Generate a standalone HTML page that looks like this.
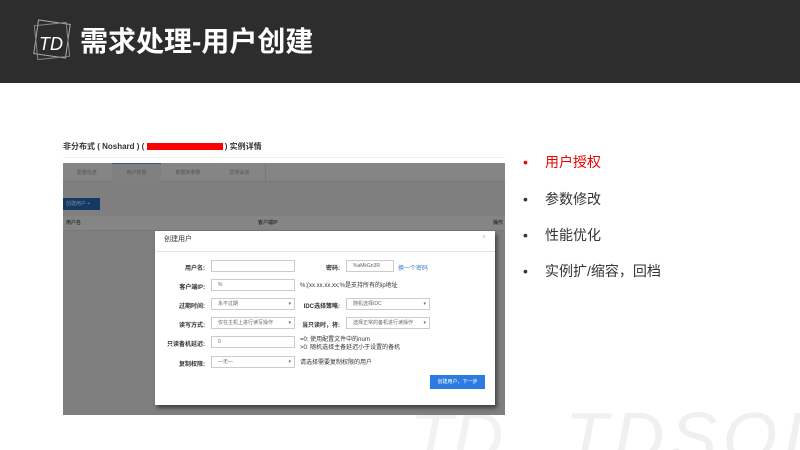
<!DOCTYPE html>
<html><head><meta charset="utf-8"><style>
*{margin:0;padding:0;box-sizing:border-box}
body{width:800px;height:450px;overflow:hidden;background:#fff;position:relative;font-family:"Liberation Sans","Noto Sans CJK SC",sans-serif}
.w{position:absolute;left:0;top:0;width:800px;height:450px;overflow:hidden}
.a{position:absolute}
.hdr{left:0;top:0;width:800px;height:83px;background:#2d2d2d}
.ttl{left:80px;top:20px;color:#fff;font-size:28px;font-weight:bold;line-height:44px}
.s{font-size:6px;color:#333}
.lb{font-size:6px;color:#333;font-weight:bold;text-align:right;width:60px}
.in{background:#fff;border:1px solid #ccc;height:12px;width:84px;font-size:5px;color:#666;padding-left:6px;line-height:10px}
.bl{left:523px;font-size:14px;color:#333}
.bl span{display:inline-block;width:22px}
</style></head><body><div class="w">
<div class="a hdr"></div>
<svg class="a" style="left:30px;top:16px" width="45" height="50" viewBox="0 0 45 50"><rect x="6" y="6" width="32" height="34" fill="none" stroke="#aaa" stroke-width="1" transform="rotate(8 22 23)"/><rect x="6" y="8" width="32" height="34" fill="none" stroke="#888" stroke-width="1" transform="rotate(-6 22 25)"/><text x="9" y="34" fill="#fff" font-size="18" font-style="italic" font-family="Liberation Sans">TD</text></svg>
<div class="a ttl">需求处理-用户创建</div>
<div class="a" style="left:565px;top:402px;font-size:70px;font-style:italic;color:#f0f0f0;letter-spacing:6px;line-height:70px;white-space:nowrap">TDSQL</div>
<div class="a" style="left:410px;top:402px;font-size:70px;font-style:italic;color:#f2f2f2;line-height:70px">TD</div>

<div class="a" style="left:63px;top:141px;font-size:8px;font-weight:bold;color:#333">非分布式 ( Noshard ) ( <span style="display:inline-block;width:76px;height:7px;background:#f00;vertical-align:middle"></span> ) 实例详情</div>
<div class="a" style="left:63px;top:157px;width:442px;height:1px;background:#eee"></div>
<div class="a" style="left:63px;top:163px;width:442px;height:252px;background:#7f7f7f"></div>
<div class="a" style="left:63px;top:163px;width:442px;height:19px;background:#858585;border-bottom:1px solid #777"></div>
<div class="a" style="left:63px;top:164px;width:48px;height:18px;font-size:5px;color:#555;text-align:center;line-height:18px">配置信息</div>
<div class="a" style="left:112px;top:163px;width:49px;height:20px;background:#808080;border-top:1px solid #3a5a80;font-size:5px;color:#555;text-align:center;line-height:18px">用户权限</div>
<div class="a" style="left:162px;top:164px;width:52px;height:18px;font-size:5px;color:#555;text-align:center;line-height:18px">数据库参数</div>
<div class="a" style="left:214px;top:164px;width:52px;height:18px;font-size:5px;color:#555;text-align:center;line-height:18px;border-right:1px solid #777">异常会话</div>
<div class="a" style="left:63px;top:198px;width:37px;height:12px;background:#143a63;font-size:5px;color:#889;line-height:12px;padding-left:3px">创建用户 +</div>
<div class="a" style="left:63px;top:216px;width:442px;height:15px;background:#858585;border-bottom:1px solid #777;font-size:5px;color:#333;font-weight:bold;line-height:15px;padding-left:3px">用户名<span style="position:absolute;left:195px">客户端IP</span><span style="position:absolute;left:430px">操作</span></div>

<div class="a" style="left:155px;top:231px;width:340px;height:174px;background:#fff;box-shadow:2px 3px 4px rgba(0,0,0,.5)"></div>
<div class="a" style="left:164px;top:234px;font-size:7px;color:#333">创建用户</div>
<div class="a" style="left:482px;top:234px;font-size:7px;color:#bbb">×</div>
<div class="a" style="left:155px;top:251px;width:340px;height:1px;background:#e5e5e5"></div>

<div class="a lb" style="left:145px;top:263px">用户名:</div><div class="a in" style="left:211px;top:260px"></div>
<div class="a lb" style="left:280px;top:263px">密码:</div><div class="a in" style="left:346px;top:260px;width:48px">%aMkGn3R</div>
<div class="a s" style="left:398px;top:263px;color:#3a7bd5">换一个密码</div>
<div class="a lb" style="left:145px;top:282px">客户端IP:</div><div class="a in" style="left:211px;top:279px">%</div>
<div class="a s" style="left:300px;top:280px">%;(xx.xx.xx.xx;%是支持所有的ip地址</div>
<div class="a lb" style="left:145px;top:301px">过期时间:</div><div class="a in" style="left:211px;top:298px">永不过期<span style="position:absolute;right:3px">▾</span></div>
<div class="a lb" style="left:280px;top:301px">IDC选择策略:</div><div class="a in" style="left:346px;top:298px">随机选择IDC<span style="position:absolute;right:3px">▾</span></div>
<div class="a lb" style="left:145px;top:320px">读写方式:</div><div class="a in" style="left:211px;top:317px">仅在主机上进行读写操作<span style="position:absolute;right:3px">▾</span></div>
<div class="a lb" style="left:280px;top:320px">当只读时，将:</div><div class="a in" style="left:346px;top:317px">选择正常的备机进行读操作<span style="position:absolute;right:3px">▾</span></div>
<div class="a lb" style="left:145px;top:339px">只读备机延迟:</div><div class="a in" style="left:211px;top:336px">0</div>
<div class="a s" style="left:300px;top:336px;line-height:8px">=0: 使用配置文件中的num<br>&gt;0: 随机选择主备延迟小于设置的备机</div>
<div class="a lb" style="left:145px;top:359px">复制权限:</div><div class="a in" style="left:211px;top:356px">—无—<span style="position:absolute;right:3px">▾</span></div>
<div class="a s" style="left:300px;top:357px">请选择需要复制权限的用户</div>
<div class="a" style="left:430px;top:375px;width:55px;height:14px;background:#2b7be0;color:#fff;font-size:5px;text-align:center;line-height:14px">创建用户，下一步</div>

<div class="a bl" style="top:152px;color:#e00"><span>•</span>用户授权</div>
<div class="a bl" style="top:189px"><span>•</span>参数修改</div>
<div class="a bl" style="top:225px"><span>•</span>性能优化</div>
<div class="a bl" style="top:261px"><span>•</span>实例扩/缩容，回档</div>
</div></body></html>
